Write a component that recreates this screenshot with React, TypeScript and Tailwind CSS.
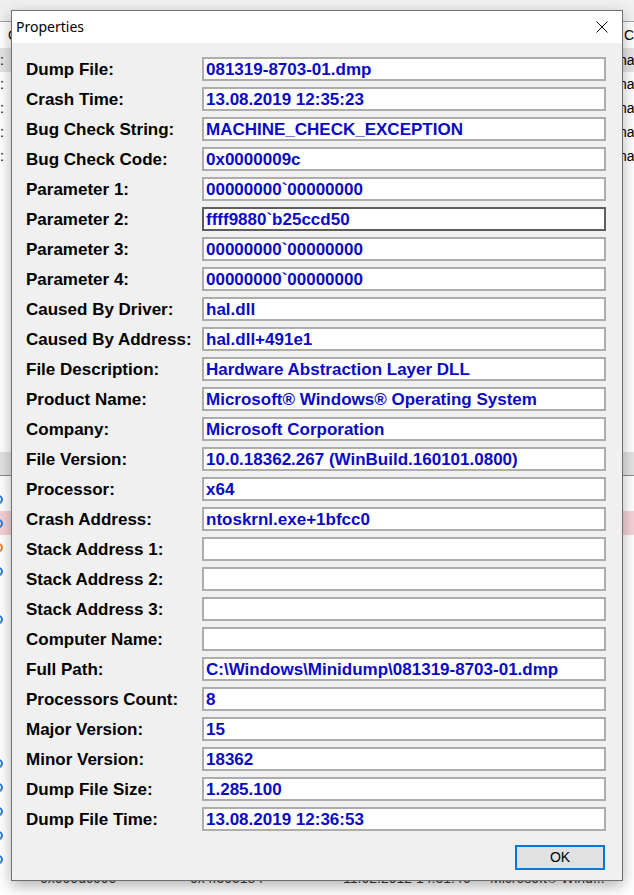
import React from "react";

const fields: [string, string][] = [
  ["Dump File:", "081319-8703-01.dmp"],
  ["Crash Time:", "13.08.2019 12:35:23"],
  ["Bug Check String:", "MACHINE_CHECK_EXCEPTION"],
  ["Bug Check Code:", "0x0000009c"],
  ["Parameter 1:", "00000000`00000000"],
  ["Parameter 2:", "ffff9880`b25ccd50"],
  ["Parameter 3:", "00000000`00000000"],
  ["Parameter 4:", "00000000`00000000"],
  ["Caused By Driver:", "hal.dll"],
  ["Caused By Address:", "hal.dll+491e1"],
  ["File Description:", "Hardware Abstraction Layer DLL"],
  ["Product Name:", "Microsoft® Windows® Operating System"],
  ["Company:", "Microsoft Corporation"],
  ["File Version:", "10.0.18362.267 (WinBuild.160101.0800)"],
  ["Processor:", "x64"],
  ["Crash Address:", "ntoskrnl.exe+1bfcc0"],
  ["Stack Address 1:", ""],
  ["Stack Address 2:", ""],
  ["Stack Address 3:", ""],
  ["Computer Name:", ""],
  ["Full Path:", "C:\\Windows\\Minidump\\081319-8703-01.dmp"],
  ["Processors Count:", "8"],
  ["Major Version:", "15"],
  ["Minor Version:", "18362"],
  ["Dump File Size:", "1.285.100"],
  ["Dump File Time:", "13.08.2019 12:36:53"],
];

// lower pane rows of the main window (mostly hidden behind the dialog)
const drivers = [
  { icon: "blue" },
  { icon: "blue", hot: true },
  { icon: "orange" },
  { icon: "blue" },
  { icon: "none" },
  { icon: "blue" },
  { icon: "none" },
  { icon: "none" },
  { icon: "none" },
  { icon: "none" },
  { icon: "none" },
  { icon: "blue" },
  { icon: "blue" },
  { icon: "blue" },
  { icon: "blue" },
  { icon: "blue" },
  { icon: "none", last: true },
];

function MainWindow() {
  return (
    <div className="flex flex-col h-full text-[14px] text-black">
      {/* toolbar */}
      <div className="h-[22px] shrink-0 bg-[#f0f0f0] border-b border-[#a0a0a0]" />

      {/* upper list */}
      <div className="h-[430px] shrink-0 bg-white flex flex-col overflow-hidden">
        <div className="h-[26px] shrink-0 flex items-center">
          <span className="w-[8px] shrink-0" />
          <span className="w-[10px] shrink-0 overflow-hidden">C</span>
          <span className="w-[606px] shrink-0" />
          <span className="shrink-0 whitespace-nowrap">Caused By Driver</span>
        </div>
        {[0, 1, 2, 3, 4].map((i) => (
          <div
            key={i}
            className={`h-[24px] shrink-0 flex items-center ${i === 0 ? "bg-[#e5e5e5]" : ""}`}
          >
            <span className="w-[619px] shrink-0">:</span>
            <span className="shrink-0 whitespace-nowrap">hal.dll</span>
          </div>
        ))}
      </div>

      {/* lower list header */}
      <div className="h-[24px] shrink-0 bg-[#e3e3e3] border-b border-[#8a8a8a]" />

      {/* lower list */}
      <div className="flex-1 bg-white flex flex-col pt-[11px] overflow-hidden">
        {drivers.map((d, i) => (
          <div
            key={i}
            className={`h-[24px] shrink-0 flex items-center ${d.hot ? "bg-[#f4d3d7]" : ""} ${
              d.last ? "-mt-[5px]" : ""
            }`}
          >
            <span className="w-[40px] shrink-0 flex items-center">
              {d.icon !== "none" && (
                <span
                  className={`-ml-[6px] w-[9px] h-[9px] rounded-full border-2 ${
                    d.icon === "orange" ? "border-[#e08a1e]" : "border-[#2a7fd4]"
                  }`}
                />
              )}
            </span>
            {d.last && (
              <>
                <span className="w-[150px] shrink-0 text-[#333]">0x000dc000</span>
                <span className="w-[153px] shrink-0 text-[#333]">0x4f305184</span>
                <span className="w-[147px] shrink-0 text-[#333]">11.02.2012 14:31:46</span>
                <span className="shrink-0 whitespace-nowrap text-[#333]">Microsoft® Wind...</span>
              </>
            )}
          </div>
        ))}
      </div>
    </div>
  );
}

function CloseIcon() {
  return (
    <svg width="12" height="12" viewBox="0 0 12 12" fill="none">
      <path d="M0.5 0.5L11.5 11.5M11.5 0.5L0.5 11.5" stroke="#111" strokeWidth="1" />
    </svg>
  );
}

export default function App() {
  return (
    <div className="relative w-[634px] h-[895px] overflow-hidden bg-[#f0f0f0] font-['Liberation_Sans',Arial,sans-serif]">
      <MainWindow />

      {/* Properties dialog */}
      <div className="absolute left-[11px] top-[10px] w-[612px] h-[871px] border border-[#707070] bg-[#f0f0f0] flex flex-col shadow-[0_5px_14px_rgba(0,0,0,0.3)]">
        {/* title bar */}
        <div className="h-[32px] shrink-0 bg-white flex items-center justify-between pl-[4px] pr-[14px] pb-[1px]">
          <span className="text-[14px] text-black font-['Noto_Sans',sans-serif]">Properties</span>
          <CloseIcon />
        </div>

        {/* body */}
        <div className="flex-1 flex flex-col pt-[14px] pl-[14px] pr-[16px]">
          <div className="grid grid-cols-[176px_404px] gap-y-[6px]">
            {fields.map(([label, value]) => (
              <React.Fragment key={label}>
                <div className="h-[24px] flex items-center text-[17px] font-bold text-black leading-none whitespace-nowrap">
                  {label}
                </div>
                <div
                  className={`h-[24px] bg-white border-2 flex items-center pl-[2px] text-[17px] font-bold text-[#0a0ac4] leading-none whitespace-nowrap overflow-hidden ${
                    label === "Parameter 2:" ? "border-[#5e5e5e]" : "border-[#adadad]"
                  }`}
                >
                  {value}
                </div>
              </React.Fragment>
            ))}
          </div>

          <div className="flex justify-end mt-[14px] mr-[1px]">
            <button className="w-[90px] h-[25px] bg-[#e1e1e1] border-2 border-[#0078d7] text-[14px] text-black flex items-center justify-center">
              OK
            </button>
          </div>
        </div>
      </div>
    </div>
  );
}
